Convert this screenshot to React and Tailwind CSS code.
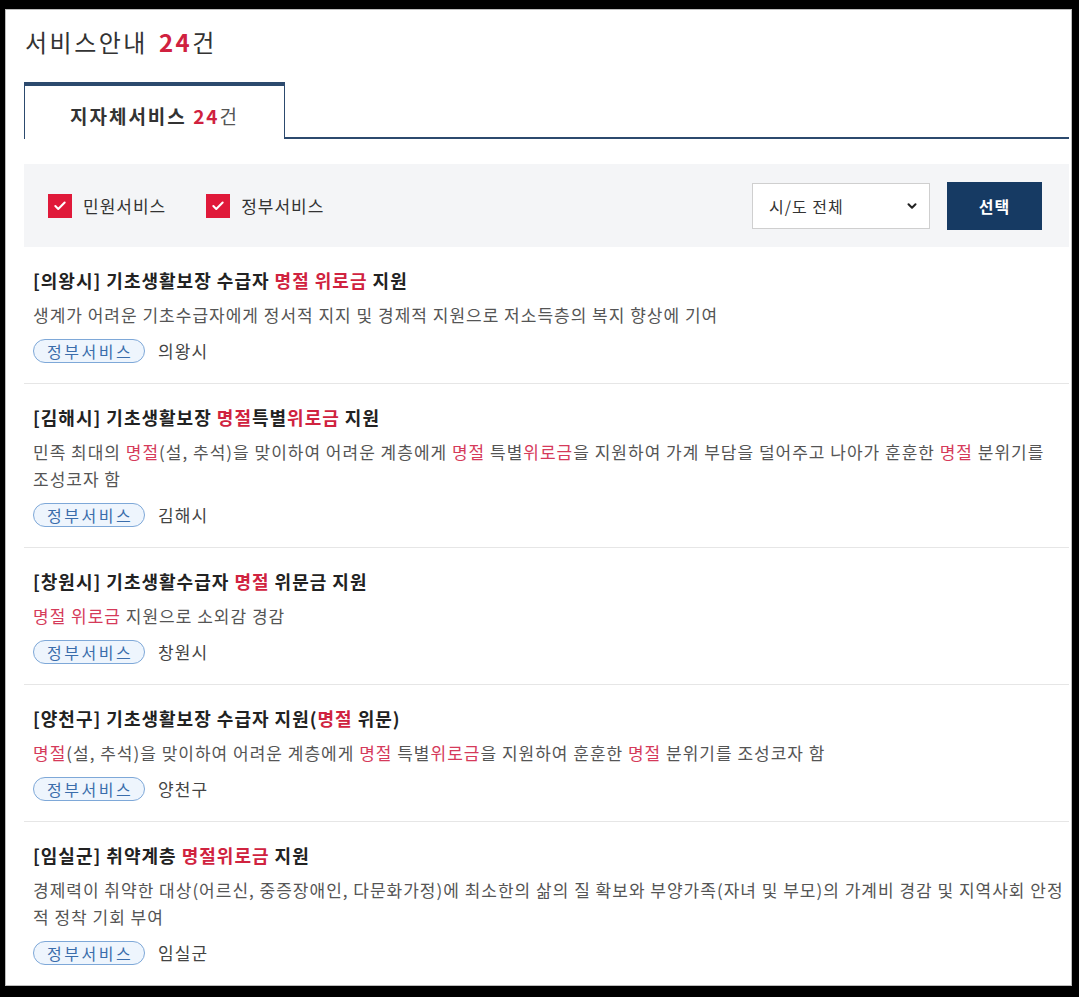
import React from 'react';
import { Check, ChevronDown } from 'lucide-react';

const services = [
  {
    title: '[의왕시] 기초생활보장 수급자 명절 위로금 지원',
    desc: '생계가 어려운 기초수급자에게 정서적 지지 및 경제적 지원으로 저소득층의 복지 향상에 기여',
    region: '의왕시',
  },
  {
    title: '[김해시] 기초생활보장 명절특별위로금 지원',
    desc: '민족 최대의 명절(설, 추석)을 맞이하여 어려운 계층에게 명절 특별위로금을 지원하여 가계 부담을 덜어주고 나아가 훈훈한 명절 분위기를 조성코자 함',
    region: '김해시',
    keepWords: true,
  },
  {
    title: '[창원시] 기초생활수급자 명절 위문금 지원',
    desc: '명절 위로금 지원으로 소외감 경감',
    region: '창원시',
  },
  {
    title: '[양천구] 기초생활보장 수급자 지원(명절 위문)',
    desc: '명절(설, 추석)을 맞이하여 어려운 계층에게 명절 특별위로금을 지원하여 훈훈한 명절 분위기를 조성코자 함',
    region: '양천구',
  },
  {
    title: '[임실군] 취약계층 명절위로금 지원',
    desc: '경제력이 취약한 대상(어르신, 중증장애인, 다문화가정)에 최소한의 삶의 질 확보와 부양가족(자녀 및 부모)의 가계비 경감 및 지역사회 안정적 정착 기회 부여',
    region: '임실군',
  },
];

// 검색어(명절, 위로금) 강조
function Highlight({ text, color }) {
  return text.split(/(명절|위로금)/).map((part, i) =>
    part === '명절' || part === '위로금' ? (
      <span key={i} className={color}>{part}</span>
    ) : (
      <React.Fragment key={i}>{part}</React.Fragment>
    )
  );
}

function CheckItem({ label, className = '' }) {
  return (
    <label className={`flex items-center ${className}`}>
      <span className="w-[24px] h-[24px] bg-[#e0193a] flex items-center justify-center">
        <Check className="w-[14px] h-[14px] text-white" strokeWidth={3.5} />
      </span>
      <span className="ml-[11px] text-[17px] tracking-[1px] text-[#333]">{label}</span>
    </label>
  );
}

function ServiceItem({ item }) {
  return (
    <li className="pl-[9px] pr-[2px] pt-[20px] pb-[19px] border-b border-[#e6e6e6]">
      <h3 className="text-[18px] leading-[26px] tracking-[1px] font-bold text-[#222]">
        <Highlight text={item.title} color="text-[#d0233f]" />
      </h3>
      <p
        className={`mt-[8px] text-[17px] leading-[27px] tracking-[1px] text-[#555] ${
          item.keepWords ? 'break-keep' : ''
        }`}
      >
        <Highlight text={item.desc} color="text-[#d53a5a]" />
      </p>
      <div className="mt-[10px] h-[26px] flex items-center">
        <span className="h-[24px] pl-[13px] pr-[11px] flex items-center rounded-full border border-[#7ea8d8] bg-[#eef5fd] text-[16px] leading-none tracking-[2.5px] text-[#3a6dab]">
          정부서비스
        </span>
        <span className="ml-[13px] text-[17px] tracking-[1px] text-[#444]">{item.region}</span>
      </div>
    </li>
  );
}

export default function App() {
  return (
    <div
      className="w-[1079px] h-[997px] bg-black pt-[9px] pl-[5px] pr-[7px] pb-[11px]"
      style={{ fontFamily: '"Noto Sans CJK KR", "Noto Sans", sans-serif' }}
    >
      <div className="h-full bg-white border border-[#bdbdbd] overflow-hidden pl-[18px] pr-[2px]">
        {/* Heading */}
        <h2 className="pt-[16px] pl-[1px] text-[24px] leading-[32px] tracking-[2.5px] text-[#333]">
          서비스안내
          <span className="ml-[11px] font-bold text-[#d0213f]">24</span>
          <span>건</span>
        </h2>

        {/* Tab */}
        <div className="mt-[24px] flex">
          <div className="w-[261px] h-[57px] border-t-4 border-x border-[#2c4a6e] pt-[17px] text-center text-[19px] leading-[26px] tracking-[2px]">
            <span className="font-bold text-[#333]">지자체서비스 </span>
            <span className="font-bold text-[#d0213f]">24</span>
            <span className="text-[#555]">건</span>
          </div>
          <div className="flex-1 border-b-2 border-[#2c4a6e]" />
        </div>

        {/* Filter */}
        <div className="mt-[25px] h-[83px] bg-[#f4f5f7] pl-[24px] pr-[27px] flex items-center">
          <CheckItem label="민원서비스" />
          <CheckItem label="정부서비스" className="ml-[40px]" />
          <div className="ml-auto w-[178px] h-[46px] bg-white border border-[#cfcfcf] flex items-center pl-[16px] pr-[10px]">
            <span className="text-[16px] tracking-[1px] text-[#333]">시/도 전체</span>
            <ChevronDown className="ml-auto w-[14px] h-[14px] text-[#222]" strokeWidth={3.5} />
          </div>
          <button className="ml-[17px] w-[95px] h-[48px] bg-[#163a63] text-white text-[16px] tracking-[1px] font-bold">
            선택
          </button>
        </div>

        {/* List */}
        <ul>
          {services.map((item) => (
            <ServiceItem key={item.title} item={item} />
          ))}
        </ul>
      </div>
    </div>
  );
}
